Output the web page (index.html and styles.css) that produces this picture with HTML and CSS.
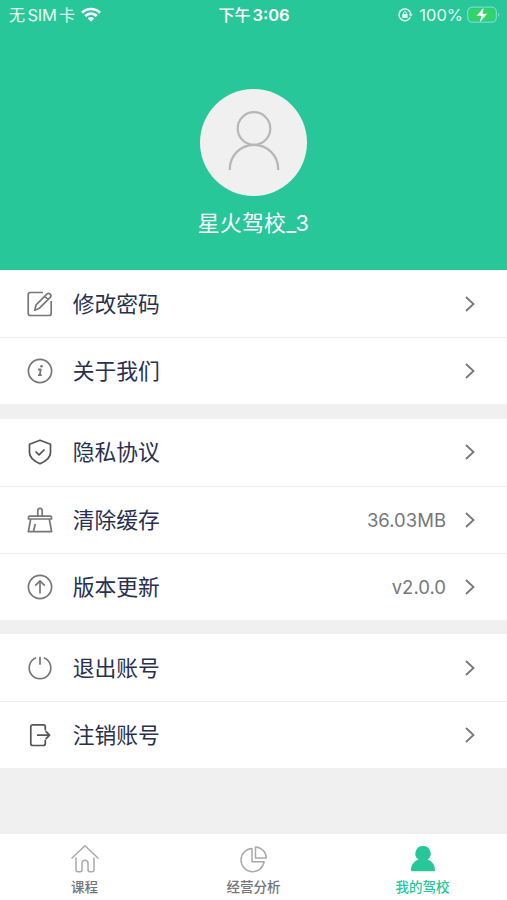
FILE: index.html
```html
<!DOCTYPE html>
<html lang="zh-CN">
<head>
<meta charset="utf-8">
<meta name="viewport" content="width=device-width">
<title>我的驾校</title>
<link rel="stylesheet" href="styles.css">
</head>
<body>
<div class="app">
  <header class="hero">
    <div class="status">
      <div class="status-left">
        <span class="carrier"><span>无</span><span class="sim">SIM</span><span>卡</span></span>
        <svg class="wifi" width="20" height="15" viewBox="0 0 20 15" fill="none" stroke="#fff" stroke-width="2.7">
          <path d="M1 5.7a12.8 12.8 0 0 1 18 0"/><path d="M4.2 9a8.2 8.2 0 0 1 11.6 0"/><path d="M10 14.7l-3.2-3.3a4.6 4.6 0 0 1 6.4 0z" fill="#fff" stroke="none"/>
        </svg>
      </div>
      <div class="time">下午<b>3:06</b></div>
      <div class="status-right">
        <svg class="lock" width="15" height="14" viewBox="0 0 15 14" fill="none" stroke="#dff8ef" stroke-width="1.5">
          <path d="M12.3 9.3A5.9 5.9 0 1 1 12.8 6.2"/><path d="M10.7 6.2h4.1l-2 2.6z" fill="#dff8ef" stroke="none"/><path d="M4.2 6h5.400v4h-5.400z" fill="#dff8ef" stroke="none"/><path d="M5.5 6.4V5a1.4 1.4 0 0 1 2.8 0v1.4" stroke-width="1"/>
        </svg>
        <span class="percent">100%</span>
        <svg class="battery" width="33" height="18" viewBox="0 0 33 18">
          <rect x=".7" y="1.2" width="28.6" height="15" rx="4.6" fill="none" stroke="#7fdcbf" stroke-width="1.2"/>
          <rect x="2.6" y="3.1" width="24.8" height="11.2" rx="2.8" fill="#33d65c"/>
          <path d="M31 6.4q2.4 2.2 0 4.6z" fill="#7fdcbf"/>
          <path d="M17.2.8L9.2 10h5l-2 7.2 8.5-9.7h-5z" fill="#fff" stroke="#28c79a" stroke-width=".5"/>
        </svg>
      </div>
    </div>
    <div class="avatar">
      <svg width="54" height="62" viewBox="0 0 54 62" fill="none" stroke="#b6b6b6" stroke-width="2.2">
        <circle cx="27" cy="18.500" r="16.3"/><path d="M2.800 60v-1a24.200 24.200 0 0 1 48.400 0v1"/>
      </svg>
    </div>
    <div class="name">星火驾校_3</div>
  </header>

  <main>
    <section class="group">
      <div class="row">
        <svg class="icon" viewBox="0 0 28 28"><path d="M17 2.500H4.200A2 2 0 0 0 2.200 4.500v19a2 2 0 0 0 2 2h19a2 2 0 0 0 2-2V11"/><path d="M8.700 20.200l1.400-5.300L20.800 4.200a2.300 2.300 0 0 1 3.400 3.200L13.500 18.200zM18.700 6.300l3.300 3.200"/></svg>
        <span class="label">修改密码</span>
        <svg class="chevron" viewBox="0 0 10 16"><path d="M1 1l7.500 7L1 15"/></svg>
      </div>
      <div class="row">
        <svg class="icon" viewBox="0 0 28 28"><circle cx="14" cy="14" r="11.600"/><path d="M12 12.500h2.700l-.9 5.700h2M12 18.200h2" stroke-width="1.800"/><circle class="dot" cx="15.500" cy="9.300" r="1.300"/></svg>
        <span class="label">关于我们</span>
        <svg class="chevron" viewBox="0 0 10 16"><path d="M1 1l7.500 7L1 15"/></svg>
      </div>
    </section>

    <section class="group">
      <div class="row">
        <svg class="icon dark" viewBox="0 0 28 28"><path d="M14 2.200l10.500 4v8.300c0 5.200-4.500 8.600-10.500 11.300C8 23.100 3.500 19.700 3.500 14.500V6.200z"/><path d="M9.500 13.500l3.500 3.300 5.500-5.300"/></svg>
        <span class="label">隐私协议</span>
        <svg class="chevron" viewBox="0 0 10 16"><path d="M1 1l7.500 7L1 15"/></svg>
      </div>
      <div class="row">
        <svg class="icon" viewBox="0 0 28 28"><path d="M11.800 10.200V4.500a2.200 2.200 0 0 1 4.400 0v5.700M2.500 13v-1.800q0-1 1-1h21q1 0 1 1V13zM4.700 13L2.400 25.600h23.200L23.300 13M9.300 18l-1.800 7.300"/></svg>
        <span class="label">清除缓存</span>
        <span class="value">36.03MB</span>
        <svg class="chevron" viewBox="0 0 10 16"><path d="M1 1l7.500 7L1 15"/></svg>
      </div>
      <div class="row">
        <svg class="icon" viewBox="0 0 28 28"><circle cx="14" cy="14" r="11.600"/><path d="M14 20.500V8M9.200 12.600L14 7.800l4.800 4.800"/></svg>
        <span class="label">版本更新</span>
        <span class="value">v2.0.0</span>
        <svg class="chevron" viewBox="0 0 10 16"><path d="M1 1l7.500 7L1 15"/></svg>
      </div>
    </section>

    <section class="group">
      <div class="row">
        <svg class="icon" viewBox="0 0 28 28"><path d="M10.200 3.800a10.800 10.800 0 1 0 7.600 0M14 2.800v8"/></svg>
        <span class="label">退出账号</span>
        <svg class="chevron" viewBox="0 0 10 16"><path d="M1 1l7.500 7L1 15"/></svg>
      </div>
      <div class="row">
        <svg class="icon dark" viewBox="0 0 28 28"><path d="M19.300 9.500V5.800a2 2 0 0 0-2-2H6.800a2 2 0 0 0-2 2v16.700a2 2 0 0 0 2 2h10.500a2 2 0 0 0 2-2v-3.700"/><path d="M11 14.200h12.200M19.600 10.200l4 4-4 4"/></svg>
        <span class="label">注销账号</span>
        <svg class="chevron" viewBox="0 0 10 16"><path d="M1 1l7.500 7L1 15"/></svg>
      </div>
    </section>
  </main>

  <nav class="tabs">
    <div class="tab">
      <svg viewBox="0 0 30 30"><path d="M1.500 14.500L15 1.800l13.500 12.700M6 13.500v12.300a2 2 0 0 0 2 2h2a2 2 0 0 0 2-2v-6.500a3 3 0 0 1 6 0v6.500a2 2 0 0 0 2 2h2a2 2 0 0 0 2-2V13.500"/></svg>
      <span>课程</span>
    </div>
    <div class="tab">
      <svg viewBox="0 0 30 30"><path d="M13 4.500v13.200h12.100A11.600 11.600 0 1 1 13 4.500zM16.500 2.900a11.200 11.200 0 0 1 10.700 11.200H16.500z"/></svg>
      <span>经营分析</span>
    </div>
    <div class="tab active">
      <svg viewBox="0 0 30 30"><path d="M15 2a7.500 7.500 0 0 1 4.500 13.600c4.500 1.500 7.500 5.400 7.500 10.600q0 1-1 1H4q-1 0-1-1c0-5.200 3-9.100 7.500-10.600A7.500 7.500 0 0 1 15 2z"/></svg>
      <span>我的驾校</span>
    </div>
  </nav>
</div>
</body>
</html>
```

FILE: styles.css
```css
* { box-sizing: border-box; }

body {
  margin: 0;
  background: #f0f0f0;
  font-family: Inter, "Noto Sans CJK SC", sans-serif;
}

svg { display: block; flex: none; }

.app {
  display: flex;
  flex-direction: column;
  height: 900px;
}

.hero {
  display: flex;
  flex-direction: column;
  align-items: center;
  height: 270px;
  background: #28c79a;
  color: #fff;
}

.status {
  display: grid;
  grid-template-columns: 1fr auto 1fr;
  align-items: center;
  width: 100%;
  height: 30px;
  padding: 0 8px 0 9px;
  font-size: 16.500px;
  line-height: 30px;
  color: #e6faf3;
}

.status-left, .status-right, .carrier {
  display: flex;
  align-items: center;
}

.carrier { gap: 2.500px; font-size: 16px; }
.sim { font-size: 16.500px; letter-spacing: -0.300px; }
.wifi { margin: -2px 0 0 6px; }
.time { color: #fff; font-weight: 500; font-size: 16px; }
.time b { margin-left: 2px; font-weight: 600; font-size: 16.500px; }
.status-right { justify-content: flex-end; }
.lock { margin-right: -1px; }
.percent { margin: 0 4px 0 7px; }
.battery { margin: -1px -1px 0 0; }

.avatar {
  display: flex;
  justify-content: center;
  width: 107px;
  height: 107px;
  margin-top: 59px;
  padding-top: 21px;
  border-radius: 50%;
  background: #f0f0f0;
}

.name {
  margin-top: 11px;
  font-size: 21.800px;
  letter-spacing: 0.300px;
  line-height: 32px;
}

.group {
  margin-bottom: 14.400px;
  background: #fff;
}

.row {
  display: flex;
  align-items: center;
  height: 67.100px;
  padding: 0 32px 0 26px;
}

.row + .row { border-top: 1px solid #eee; }

.icon {
  width: 28px;
  height: 28px;
  fill: none;
  stroke: #777;
  stroke-width: 1.700;
  stroke-linejoin: round;
}

.icon.dark { stroke: #555; }
.icon .dot { fill: #777; stroke: none; }

.label {
  flex: 1;
  margin-left: 18.700px;
  color: #28304f;
  font-size: 21.800px;
  line-height: 32px;
}

.value {
  margin-right: 19px;
  color: #777;
  font-size: 18.500px;
}

.chevron {
  width: 10px;
  height: 16px;
  fill: none;
  stroke: #777;
  stroke-width: 1.800;
}

.tabs {
  display: grid;
  grid-template-columns: repeat(3, 1fr);
  height: 66px;
  margin-top: auto;
  background: #fff;
}

.tab {
  display: flex;
  flex-direction: column;
  align-items: center;
  padding-top: 10px;
  color: #747679;
  font-size: 13.500px;
  font-weight: 500;
  line-height: 20px;
}

.tab svg {
  width: 30px;
  height: 30px;
  margin-bottom: 3px;
  fill: none;
  stroke: #aaa;
  stroke-width: 1.500;
  stroke-linejoin: round;
}

.tab.active { color: #28c79a; }
.tab.active svg { fill: #28c79a; stroke: none; }
```
